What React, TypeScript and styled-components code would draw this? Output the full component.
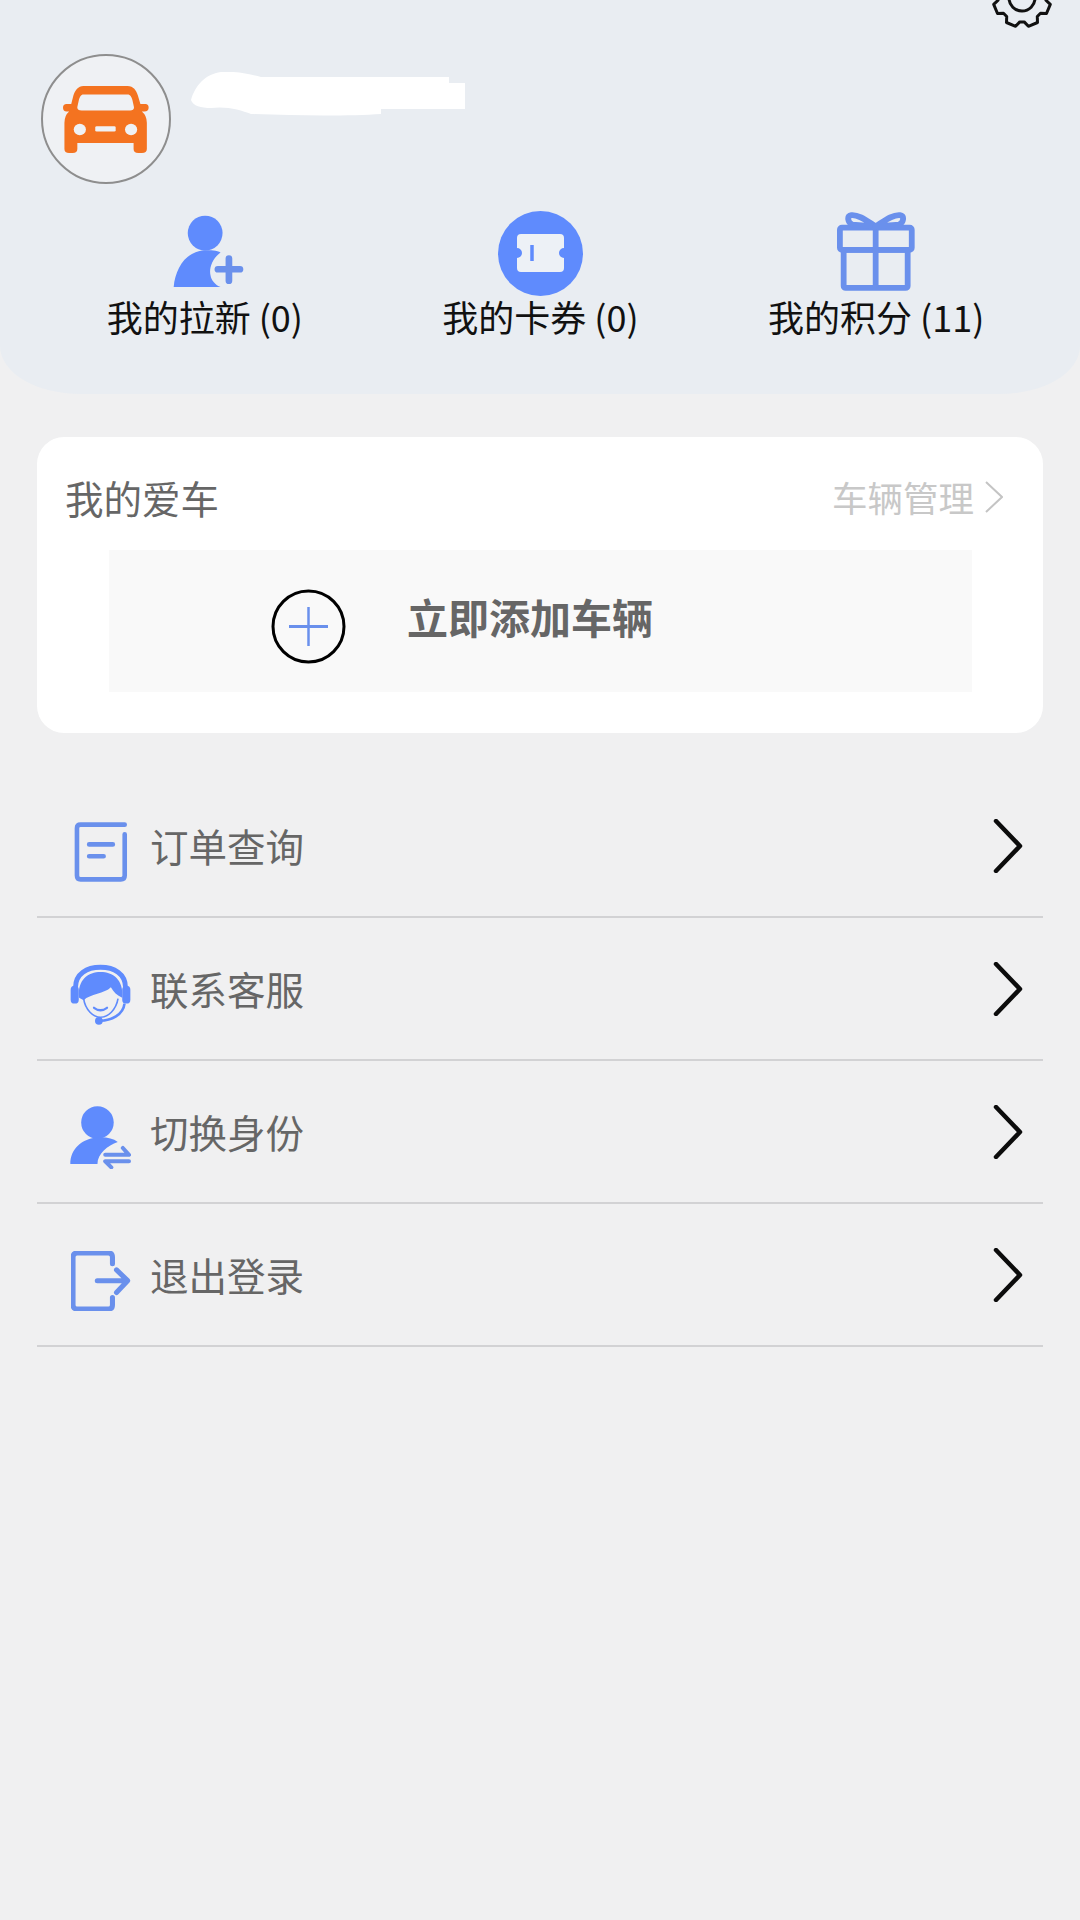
import React from "react";
import styled, { createGlobalStyle } from "styled-components";

const GlobalStyle = createGlobalStyle`
    html, body {
        margin: 0;
        padding: 0;
        background: #f0f0f1;
    }
`;

const Page = styled.div`
    position: relative;
    width: 1080px;
    min-height: 1920px;
    overflow: hidden;
    background: #f0f0f1;
    font-family: "Noto Sans CJK SC", "Noto Sans", sans-serif;
`;

const Header = styled.header`
    position: relative;
    height: 394px;
    box-sizing: border-box;
    padding-top: 54px;
    background: #e9edf2;
    border-radius: 0 0 80px 80px / 0 0 48px 48px;
`;

const GearWrap = styled.div`
    position: absolute;
    top: -37px;
    right: 23px;
    width: 70px;
    height: 70px;
`;

const Profile = styled.div`
    display: flex;
    align-items: flex-start;
    gap: 20px;
    padding-left: 41px;
`;

const Avatar = styled.div`
    display: flex;
    align-items: center;
    justify-content: center;
    width: 130px;
    height: 130px;
    box-sizing: border-box;
    border: 2px solid #8e8e8e;
    border-radius: 50%;
    background: #eff1f4;
`;

const NameMask = styled.svg`
    margin-top: 18px;
    display: block;
`;

const Stats = styled.div`
    display: grid;
    grid-template-columns: repeat(3, 1fr);
    margin-top: 27px;
    padding: 0 36px 0 37px;
`;

const Stat = styled.div`
    display: flex;
    flex-direction: column;
    align-items: center;
`;

const StatIcon = styled.div<{ $nudge?: number; $lift?: number }>`
    display: flex;
    align-items: center;
    justify-content: center;
    height: 85px;
    box-sizing: border-box;
    padding-left: ${({ $nudge }) => $nudge ?? 0}px;
    padding-bottom: ${({ $lift }) => $lift ?? 0}px;
`;

const StatLabel = styled.div`
    font-size: 36px;
    line-height: 41px;
    color: #111;
    white-space: nowrap;
`;

const CarCard = styled.section`
    margin: 43px 37px 0;
    padding-bottom: 41px;
    background: #fff;
    border-radius: 27px;
`;

const CardHead = styled.div`
    display: flex;
    align-items: center;
    justify-content: space-between;
    height: 107px;
    padding: 6px 40px 0 28px;
`;

const CardTitle = styled.h2`
    margin: 0;
    font-size: 38.5px;
    font-weight: 400;
    color: #666;
`;

const ManageLink = styled.div`
    display: flex;
    align-items: center;
    gap: 11px;
    font-size: 35.5px;
    color: #c8c8c8;
`;

const AddBox = styled.div`
    display: flex;
    align-items: center;
    gap: 61px;
    height: 142px;
    margin: 0 71px 0 72px;
    padding-left: 162px;
    background: #f9f9f9;
`;

const AddCircle = styled.svg`
    display: block;
    margin-top: 10px;
`;

const AddText = styled.div`
    margin-bottom: 10px;
    font-size: 41px;
    font-weight: 700;
    color: #666;
`;

const Menu = styled.nav`
    margin: 42px 37px 0;
`;

const MenuRow = styled.div`
    display: flex;
    align-items: center;
    height: 143px;
    box-sizing: border-box;
    padding: 0 20px 0 33px;
    border-bottom: 2px solid #d2d2d4;
`;

const MenuIcon = styled.div`
    display: flex;
    align-items: center;
    justify-content: center;
    width: 61px;
    margin: 12px 19px 0 0;
`;

const MenuLabel = styled.div`
    flex: 1;
    margin-bottom: 2px;
    font-size: 38.5px;
    color: #666;
`;

const BLUE = "#5f8bfd";
const LINE_BLUE = "#6a90ec";

// 8 tooth gear outline, centred on 35,35
const gearPath = (() => {
    const pts: string[] = [];
    for (let i = 0; i < 8; i++) {
        const a = (i * Math.PI) / 4 + Math.PI / 8;
        [
            [-0.3, 24],
            [-0.17, 29],
            [0.17, 29],
            [0.3, 24],
        ].forEach(([d, r]) => {
            const x = 35 + r * Math.cos(a + d);
            const y = 35 + r * Math.sin(a + d);
            pts.push(`${x.toFixed(1)},${y.toFixed(1)}`);
        });
    }
    return pts.join(" ");
})();

const GearIcon = () => (
    <svg width="70" height="70" viewBox="0 0 70 70" fill="none" stroke="#111" strokeWidth="3" strokeLinejoin="round">
        <polygon points={gearPath} />
        <circle cx="35" cy="35" r="13" />
    </svg>
);

const CarIcon = () => (
    <svg width="86" height="67" viewBox="188 262 240 200" preserveAspectRatio="none">
        <path
            fill="#f47320"
            fillRule="evenodd"
            d="M245 262H368C385 262 392 275 397 290L404 316H418Q427 316 427 327Q427 338 415 338H408Q422 350 422 372V450Q422 462 408 462H398Q385 462 385 450V432H228V450Q228 462 215 462H205Q192 462 192 450V372Q192 350 205 338H198Q188 338 188 327Q188 316 198 316H211L217 290C222 275 230 262 245 262ZM245 287H368C376 287 380 295 382 305L386 325Q387 335 375 335H240Q227 335 228 325L232 305C234 295 238 287 245 287Z"
        />
        <circle cx="235" cy="392" r="17" fill="#eff1f4" />
        <circle cx="378" cy="392" r="17" fill="#eff1f4" />
        <rect x="278" y="382" width="57" height="16" rx="4" fill="#eff1f4" />
    </svg>
);

const AddUserIcon = () => (
    <svg width="71" height="73" viewBox="498 640 212 218">
        <circle cx="594" cy="694" r="52" fill={BLUE} />
        <path
            fill={BLUE}
            d="M500 855C505 800 535 750 590 745C610 745 630 745 640 752C615 770 605 800 610 820C612 835 625 850 640 855Z"
        />
        <path d="M665 770V836M632 802H698" stroke={LINE_BLUE} strokeWidth="20" strokeLinecap="round" />
    </svg>
);

const TicketIcon = () => (
    <svg width="85" height="85" viewBox="0 0 85 85">
        <circle cx="42.5" cy="42.5" r="42.5" fill={BLUE} />
        <path
            fill="#edf1f6"
            d="M23 23H62Q66 23 66 27V37A5 5 0 0 0 66 47V57Q66 61 62 61H23Q19 61 19 57V47A5 5 0 0 0 19 37V27Q19 23 23 23Z"
        />
        <path d="M34 34V50" stroke={BLUE} strokeWidth="3.5" />
    </svg>
);

const GiftIcon = () => (
    <svg width="80" height="79" viewBox="860 638 230 232" fill="none" stroke={LINE_BLUE} strokeWidth="17" strokeLinejoin="round">
        <rect x="869" y="684" width="211" height="65" rx="6" />
        <rect x="880" y="749" width="188" height="112" rx="6" />
        <path d="M974 684V861" />
        <path d="M974 680C950 665 925 645 903 647C888 650 892 668 905 675Z" />
        <path d="M974 680C998 665 1023 645 1045 647C1060 650 1056 668 1043 675Z" />
    </svg>
);

const DocIcon = () => (
    <svg width="54" height="64" viewBox="130 92 164 184" fill="none" stroke={LINE_BLUE} strokeWidth="14" strokeLinecap="round">
        <path d="M284 101H150Q139 101 139 112V255Q139 267 150 267H272Q284 267 284 255V130" />
        <path d="M176 161H248M176 197H220" />
    </svg>
);

const HeadsetIcon = () => (
    <svg width="61" height="63" viewBox="118 516 188 192" fill="none">
        <path d="M135 590C135 548 170 528 212 528C254 528 289 548 289 590" stroke={BLUE} strokeWidth="15" />
        <rect x="120" y="585" width="25" height="55" rx="12" fill={BLUE} />
        <rect x="279" y="585" width="25" height="55" rx="12" fill={BLUE} />
        <path
            fill={BLUE}
            d="M146 622C140 566 175 543 212 543C250 543 284 566 279 622C263 615 252 605 244 590C225 610 180 610 160 630Z"
        />
        <path d="M160 625C165 660 190 682 212 682C235 682 260 660 266 625" stroke={BLUE} strokeWidth="5" />
        <path d="M192 653Q212 668 232 653" stroke={BLUE} strokeWidth="7" strokeLinecap="round" />
        <path d="M286 640C282 675 245 692 210 693" stroke={BLUE} strokeWidth="8" />
        <circle cx="207" cy="693" r="12" fill={BLUE} />
    </svg>
);

const SwapUserIcon = () => (
    <svg width="61" height="63" viewBox="124 140 180 184">
        <circle cx="205" cy="188" r="48" fill={BLUE} />
        <path
            fill={BLUE}
            d="M125 310C125 265 160 235 205 232C230 230 250 235 265 245C235 255 205 280 205 310Z"
        />
        <path
            d="M280 263L298 283H228M246 320L228 302H298"
            fill="none"
            stroke={LINE_BLUE}
            strokeWidth="12"
            strokeLinecap="round"
            strokeLinejoin="round"
        />
    </svg>
);

const LogoutIcon = () => (
    <svg width="60" height="60" viewBox="122 572 178 178" fill="none" stroke={LINE_BLUE} strokeWidth="15" strokeLinecap="round" strokeLinejoin="round">
        <path d="M245 610V590Q245 578 233 578H140Q128 578 128 590V732Q128 744 140 744H233Q245 744 245 732V710" />
        <path d="M200 660H288M257 628L290 660L257 695" />
    </svg>
);

const BigChevron = () => (
    <svg width="30" height="54" viewBox="0 0 30 54" fill="none" stroke="#0c0c0c" strokeWidth="4.5" strokeLinecap="round" strokeLinejoin="round">
        <path d="M3 2L27 27L3 52" />
    </svg>
);

const stats = [
    { icon: <AddUserIcon />, label: "我的拉新 (0)", nudge: 8, lift: 5 },
    { icon: <TicketIcon />, label: "我的卡券 (0)" },
    { icon: <GiftIcon />, label: "我的积分 (11)", lift: 5 },
];

const menu = [
    { icon: <DocIcon />, label: "订单查询" },
    { icon: <HeadsetIcon />, label: "联系客服" },
    { icon: <SwapUserIcon />, label: "切换身份" },
    { icon: <LogoutIcon />, label: "退出登录" },
];

export default function App() {
    return (
        <Page>
            <GlobalStyle />
            <Header>
                <GearWrap>
                    <GearIcon />
                </GearWrap>
                <Profile>
                    <Avatar>
                        <CarIcon />
                    </Avatar>
                    <NameMask width="275" height="44" viewBox="0 0 275 44">
                        <path
                            fill="#fff"
                            d="M0 28C4 14 14 2 30 0C46 -1 58 2 70 5H258V11H274V37H190V42C160 44 110 44 60 42C50 38 36 34 20 36C10 36 2 34 0 28Z"
                        />
                    </NameMask>
                </Profile>
                <Stats>
                    {stats.map((s) => (
                        <Stat key={s.label}>
                            <StatIcon $nudge={s.nudge} $lift={s.lift}>
                                {s.icon}
                            </StatIcon>
                            <StatLabel>{s.label}</StatLabel>
                        </Stat>
                    ))}
                </Stats>
            </Header>

            <CarCard>
                <CardHead>
                    <CardTitle>我的爱车</CardTitle>
                    <ManageLink>
                        车辆管理
                        <svg width="18" height="32" viewBox="0 0 18 32" fill="none" stroke="#c4c4c4" strokeWidth="2">
                            <path d="M1 1L17 16L1 31" />
                        </svg>
                    </ManageLink>
                </CardHead>
                <AddBox>
                    <AddCircle width="75" height="75" viewBox="0 0 75 75" fill="none">
                        <circle cx="37.5" cy="37.5" r="35.5" stroke="#000" strokeWidth="3" />
                        <path d="M37.5 18V57" stroke={LINE_BLUE} strokeWidth="2.5" />
                        <path d="M18 37.5H57" stroke={LINE_BLUE} strokeWidth="3" />
                    </AddCircle>
                    <AddText>立即添加车辆</AddText>
                </AddBox>
            </CarCard>

            <Menu>
                {menu.map((m) => (
                    <MenuRow key={m.label}>
                        <MenuIcon>{m.icon}</MenuIcon>
                        <MenuLabel>{m.label}</MenuLabel>
                        <BigChevron />
                    </MenuRow>
                ))}
            </Menu>
        </Page>
    );
}
